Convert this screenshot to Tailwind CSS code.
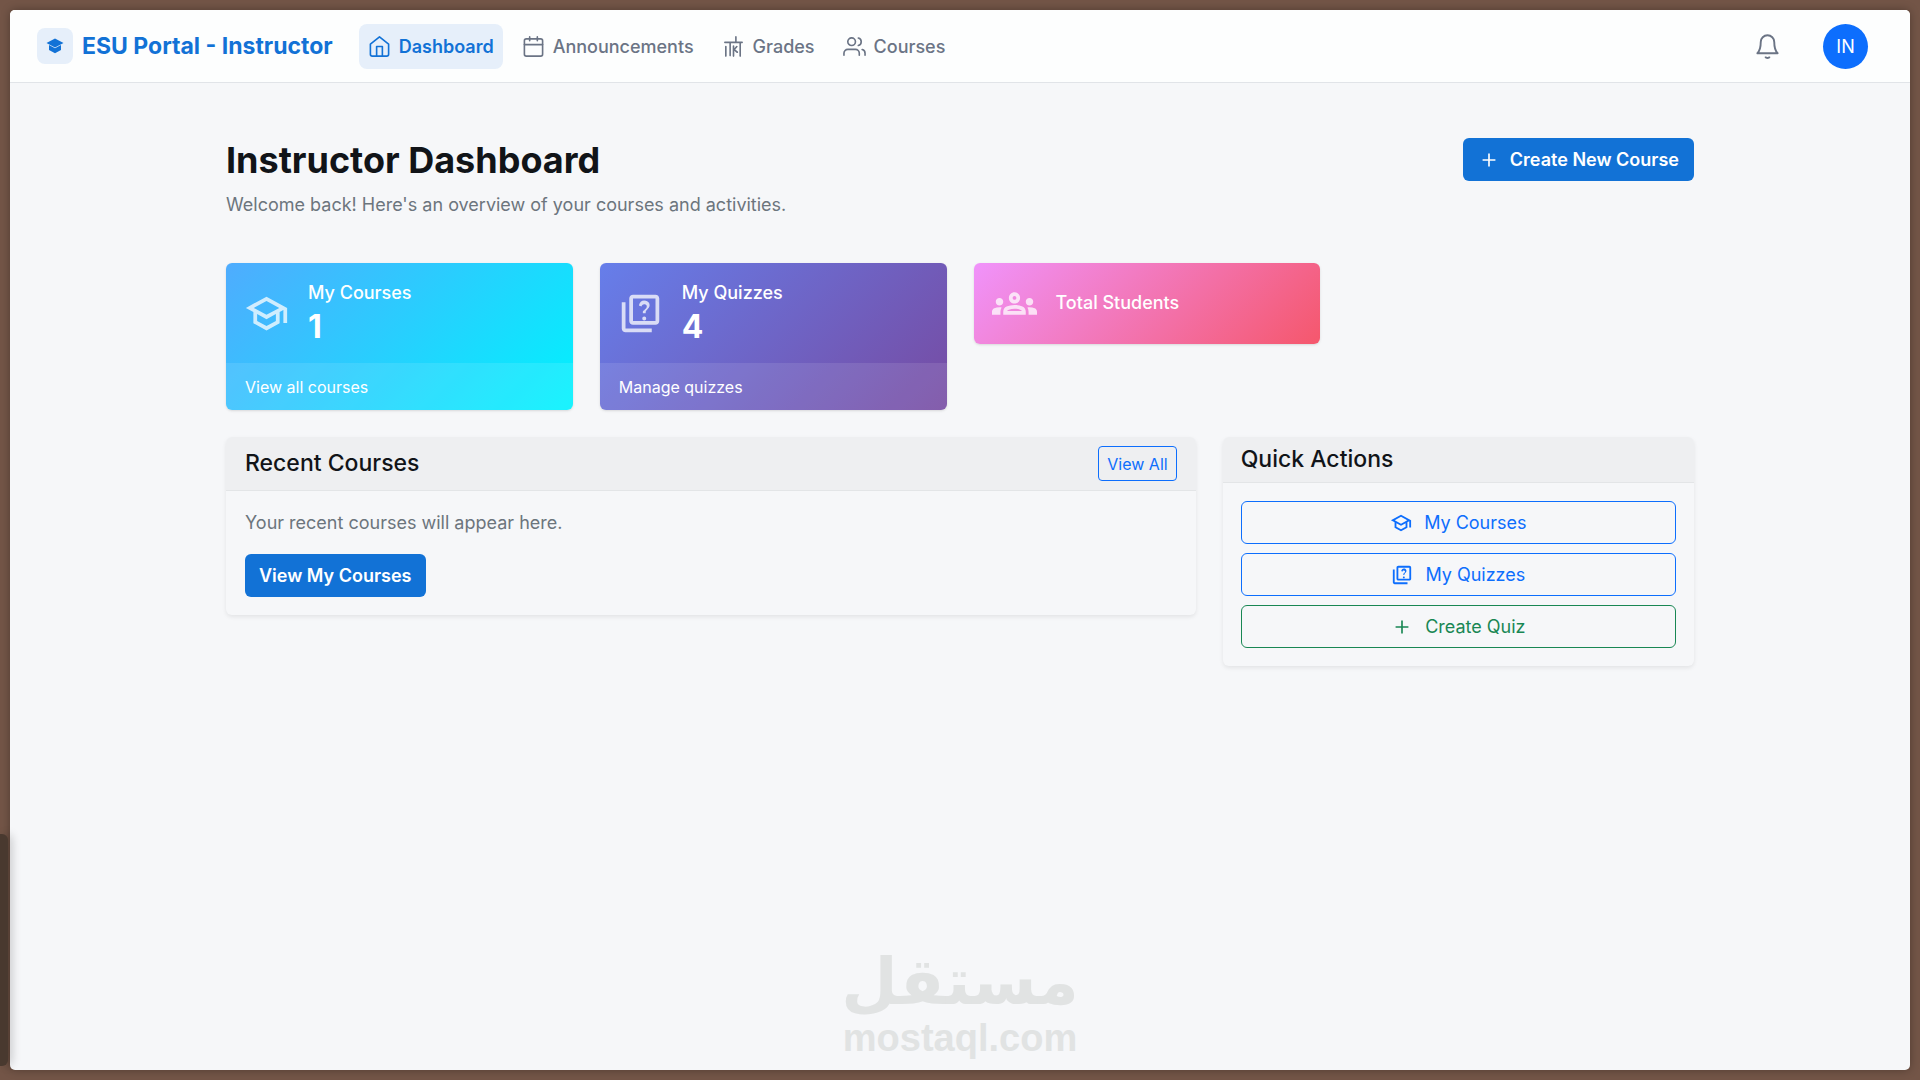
<!DOCTYPE html>
<html lang="en">

<head>
    <meta charset="UTF-8">
    <meta name="viewport" content="width=device-width, initial-scale=1.0">
    <script src="https://cdn.jsdelivr.net/npm/@tailwindcss/browser@4"></script>
    <title>ESU Portal - Instructor</title>
</head>

<body class="relative flex min-h-screen flex-col bg-[#735547] p-[10px] font-['Inter',sans-serif] text-[18px] leading-[27px] text-[#111418]">
    <!-- Icons -->
    <svg class="hidden">
        <symbol id="school" viewBox="0 0 24 24">
            <path fill="currentColor" d="M12 3 1 9l4 2.18v6L12 21l7-3.82v-6l2-1.09V17h2V9L12 3zm6.82 6L12 12.72 5.18 9 12 5.28 18.82 9zM17 15.99l-5 2.73-5-2.73v-3.72L12 15l5-2.73v3.72z" />
        </symbol>
        <symbol id="quiz" viewBox="0 0 24 24">
            <path fill="currentColor" d="M4 6H2v14c0 1.1.9 2 2 2h14v-2H4V6zm16-4H8c-1.1 0-2 .9-2 2v12c0 1.1.9 2 2 2h12c1.1 0 2-.9 2-2V4c0-1.1-.9-2-2-2zm0 14H8V4h12v12zm-6.49-5.16c.41-.73 1.18-1.16 1.63-1.8.48-.68.21-1.94-1.14-1.94-.88 0-1.32.67-1.5 1.23l-1.37-.57C11.51 5.96 12.52 5 13.99 5c1.23 0 2.08.56 2.51 1.26.37.6.58 1.73.01 2.57-.63.93-1.23 1.21-1.56 1.81-.13.24-.18.4-.18 1.18h-1.52c.01-.41-.06-1.08.26-1.66zm-.56 3.79c0-.59.47-1.04 1.05-1.04.59 0 1.04.45 1.04 1.04 0 .58-.44 1.05-1.04 1.05-.58 0-1.05-.47-1.05-1.05z" />
        </symbol>
        <symbol id="groups" viewBox="0 0 24 24">
            <path fill="currentColor" d="M4 13c1.1 0 2-.9 2-2s-.9-2-2-2-2 .9-2 2 .9 2 2 2zm1.13 1.1c-.37-.06-.74-.1-1.13-.1-.99 0-1.93.21-2.78.58C.48 14.9 0 15.62 0 16.43V18h4.5v-1.61c0-.83.23-1.61.63-2.29zM20 13c1.1 0 2-.9 2-2s-.9-2-2-2-2 .9-2 2 .9 2 2 2zm4 3.43c0-.81-.48-1.53-1.22-1.85-.85-.37-1.79-.58-2.78-.58-.39 0-.76.04-1.13.1.4.68.63 1.46.63 2.29V18H24v-1.57zM16.24 13.65c-1.17-.52-2.61-.9-4.24-.9s-3.07.39-4.24.9C6.68 14.13 6 15.21 6 16.39V18h12v-1.61c0-1.18-.68-2.26-1.76-2.74zM8.07 16c.09-.23.13-.39.91-.69.97-.38 1.99-.56 3.02-.56s2.05.18 3.02.56c.77.3.81.46.91.69H8.07zM12 8c.55 0 1 .45 1 1s-.45 1-1 1-1-.45-1-1 .45-1 1-1m0-2c-1.66 0-3 1.34-3 3s1.34 3 3 3 3-1.34 3-3-1.34-3-3-3z" />
        </symbol>
        <symbol id="plus" viewBox="0 0 24 24">
            <path fill="currentColor" d="M19 12.900h-6.100V19h-1.800v-6.100H5v-1.800h6.100V5h1.800v6.100H19z" />
        </symbol>
    </svg>

    <div class="flex grow flex-col overflow-hidden rounded-[5px] bg-[#f6f7f9] shadow-[0_0_10px_rgba(0,0,0,0.3)]">
        <!-- Navbar -->
        <header class="flex h-[73px] items-center border-b border-[#e1e4e8] bg-[#fdfefe] pr-[42px] pl-[27px]">
            <a href="#" class="flex items-center gap-[9px] text-[23px] font-bold text-[#1272d6]">
                <span class="flex size-9 items-center justify-center rounded-lg bg-[#e6effa]">
                    <svg class="size-[18px]" viewBox="0 0 18 18" fill="currentColor">
                        <path d="M9 1.500 17.500 6 9 10.600.500 6z" />
                        <path d="M3 8 9 11.200l6-3.200v5L9 16.200 3 13z" />
                    </svg>
                </span>
                ESU Portal - Instructor
            </a>
            <nav class="ml-[26px] flex items-center gap-[10px] font-medium text-[#6b7485]">
                <a href="#" class="flex h-[45px] items-center gap-2 rounded-lg bg-[#e6effa] px-[9px] font-semibold text-[#1272d6]">
                    <svg class="size-[23px]" viewBox="0 0 24 24" fill="none" stroke="currentColor" stroke-width="1.700" stroke-linejoin="round">
                        <path d="M2.500 9.500 12 2l9.500 7.500V20a2 2 0 0 1-2 2h-15a2 2 0 0 1-2-2zM9 22V12h6v10" />
                    </svg>
                    Dashboard
                </a>
                <a href="#" class="flex h-[45px] items-center gap-2 rounded-lg px-[9px]">
                    <svg class="size-[23px]" viewBox="0 0 24 24" fill="none" stroke="currentColor" stroke-width="1.700" stroke-linecap="round" stroke-linejoin="round">
                        <rect x="2.500" y="4" width="19" height="18" rx="2" />
                        <path d="M8 2v4M16 2v4M2.500 10h19" />
                    </svg>
                    Announcements
                </a>
                <a href="#" class="flex h-[45px] items-center gap-2 rounded-lg px-[9px]">
                    <svg class="size-[23px]" viewBox="0 0 24 24" fill="none" stroke="currentColor" stroke-width="1.700" stroke-linecap="round" stroke-linejoin="round">
                        <path d="M3 7.700h18M14.500 2v5.700M4 12v10M8.500 8v13.500M12 11.500V22M19 7.700V22M12 16l3.500-4M13 15.500l3 2.500" />
                    </svg>
                    Grades
                </a>
                <a href="#" class="flex h-[45px] items-center gap-2 rounded-lg px-[9px]">
                    <svg class="size-[23px]" viewBox="0 0 24 24" fill="none" stroke="currentColor" stroke-width="1.700" stroke-linecap="round" stroke-linejoin="round">
                        <path d="M17 21v-2a4 4 0 0 0-4-4H5a4 4 0 0 0-4 4v2M23 21v-2a4 4 0 0 0-3-3.870M16 3.130a4 4 0 0 1 0 7.750" />
                        <circle cx="9" cy="7" r="4" />
                    </svg>
                    Courses
                </a>
            </nav>
            <button type="button" aria-label="Notifications" class="ml-auto text-[#6b7485]">
                <svg class="size-[27px]" viewBox="0 0 24 24" fill="none" stroke="currentColor" stroke-width="1.700" stroke-linejoin="round">
                    <path d="M18 8A6 6 0 0 0 6 8c0 7-3 10-3 10h18s-3-3-3-10M14 21a2.200 2.200 0 0 1-4 0" />
                </svg>
            </button>
            <button type="button" class="ml-[42px] size-[45px] rounded-full bg-[#0d6efd] text-white">IN</button>
        </header>

        <!-- Main Content -->
        <main class="mx-auto w-full max-w-[1468px] pt-[55px]">
            <div class="flex items-start justify-between">
                <div>
                    <h1 class="text-4xl leading-[45px] font-bold">Instructor Dashboard</h1>
                    <p class="mt-2 text-[#6c757d]">Welcome back! Here's an overview of your courses and activities.</p>
                </div>
                <button type="button" class="flex h-[43px] items-center gap-[10px] rounded-md bg-[#1272d6] px-[15px] font-semibold text-white">
                    <svg class="size-[22px]"><use href="#plus" /></svg>
                    Create New Course
                </button>
            </div>

            <div class="mt-[45px] grid grid-cols-4 items-start gap-[27px] font-medium text-white">
                <div class="overflow-hidden rounded-md bg-[linear-gradient(135deg,#4facfe_0%,#00f2fe_100%)] shadow-sm">
                    <div class="flex h-[100px] items-center gap-[19px] px-[18px]">
                        <svg class="size-[45px] opacity-75"><use href="#school" /></svg>
                        <div class="pb-[2px]">
                            <h2>My Courses</h2>
                            <p class="mt-[2px] text-[32px] leading-[38px] font-bold">1</p>
                        </div>
                    </div>
                    <a href="#" class="flex h-[47px] items-center bg-white/10 px-[19px] text-base font-normal">View all courses</a>
                </div>
                <div class="overflow-hidden rounded-md bg-[linear-gradient(135deg,#667eea_0%,#764ba2_100%)] shadow-sm">
                    <div class="flex h-[100px] items-center gap-[19px] px-[18px]">
                        <svg class="size-[45px] opacity-75"><use href="#quiz" /></svg>
                        <div class="pb-[2px]">
                            <h2>My Quizzes</h2>
                            <p class="mt-[2px] text-[32px] leading-[38px] font-bold">4</p>
                        </div>
                    </div>
                    <a href="#" class="flex h-[47px] items-center bg-white/10 px-[19px] text-base font-normal">Manage quizzes</a>
                </div>
                <div class="overflow-hidden rounded-md bg-[linear-gradient(135deg,#f093fb_0%,#f5576c_100%)] shadow-sm">
                    <div class="flex h-[81px] items-center gap-[19px] px-[18px]">
                        <svg class="size-[45px] opacity-75"><use href="#groups" /></svg>
                        <div class="pb-[2px]">
                            <h2>Total Students</h2>
                        </div>
                    </div>
                </div>
            </div>

            <div class="mt-[27px] grid grid-cols-3 items-start gap-[27px]">
                <section class="col-span-2 overflow-hidden rounded-md shadow-[0_2px_4px_rgba(0,0,0,0.08)]">
                    <div class="flex h-[54px] items-center justify-between border-b border-[#e3e5e7] bg-[#eeeff1] px-[19px]">
                        <h2 class="text-[23px] font-medium">Recent Courses</h2>
                        <button type="button" class="h-[35px] rounded border border-[#0d6efd] px-2 text-base text-[#0d6efd]">View All</button>
                    </div>
                    <div class="px-[19px] py-[18px]">
                        <p class="text-[#6c757d]">Your recent courses will appear here.</p>
                        <button type="button" class="mt-[18px] h-[43px] rounded-md bg-[#1272d6] px-[14px] font-semibold text-white">View My Courses</button>
                    </div>
                </section>
                <section class="overflow-hidden rounded-md shadow-[0_2px_4px_rgba(0,0,0,0.08)]">
                    <div class="flex h-[46px] items-center border-b border-[#e3e5e7] bg-[#eeeff1] px-[18px]">
                        <h2 class="text-[23px] font-medium">Quick Actions</h2>
                    </div>
                    <div class="flex flex-col gap-[9px] p-[18px]">
                        <button type="button" class="flex h-[43px] items-center justify-center gap-3 rounded-md border border-[#0d6efd] text-[#0d6efd]">
                            <svg class="size-[22px]"><use href="#school" /></svg>
                            My Courses
                        </button>
                        <button type="button" class="flex h-[43px] items-center justify-center gap-3 rounded-md border border-[#0d6efd] text-[#0d6efd]">
                            <svg class="size-[22px]"><use href="#quiz" /></svg>
                            My Quizzes
                        </button>
                        <button type="button" class="flex h-[43px] items-center justify-center gap-3 rounded-md border border-[#198754] text-[#198754]">
                            <svg class="size-[22px]"><use href="#plus" /></svg>
                            Create Quiz
                        </button>
                    </div>
                </section>
            </div>
        </main>
    </div>

    <!-- Watermark -->
    <div class="pointer-events-none absolute inset-x-0 bottom-[22px] flex flex-col items-center font-bold text-[#e1e3e3]">
        <span lang="ar" dir="rtl" class="font-['DejaVu_Sans',sans-serif] text-[65px] leading-[72px]">مستقل</span>
        <span class="font-['Liberation_Sans',sans-serif] text-[38px] leading-[40px]">mostaql.com</span>
    </div>

    <!-- Side handle -->
    <div class="absolute bottom-[14px] left-0 h-[232px] w-2 rounded-r-md bg-[#49392f] shadow-[4px_0_10px_rgba(0,0,0,0.2)]"></div>
</body>

</html>
